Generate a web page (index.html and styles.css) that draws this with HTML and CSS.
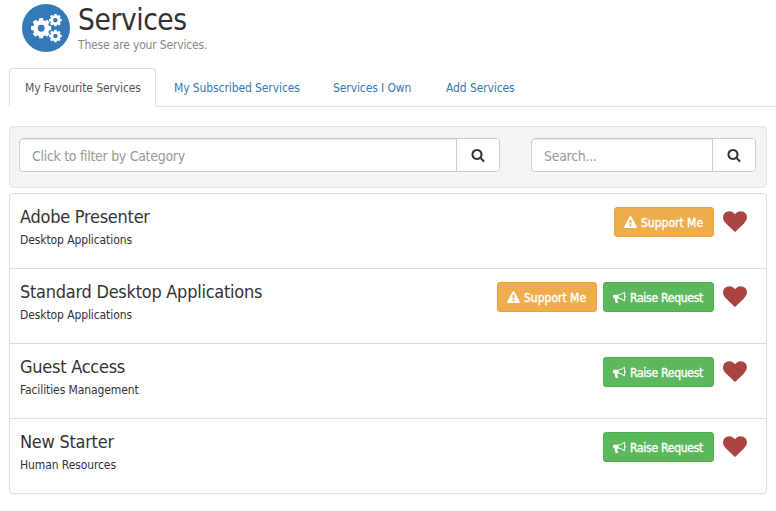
FILE: index.html
```html
<!DOCTYPE html>
<html lang="en">
<head>
<meta charset="utf-8">
<title>Services</title>
<link rel="stylesheet" href="styles.css">
</head>
<body>
<svg class="sprite" aria-hidden="true">
  <symbol id="search" viewBox="0 0 1792 1792"><path d="M1216 832q0-185-131.500-316.500t-316.500-131.500-316.500 131.500-131.500 316.500 131.500 316.500 316.500 131.500 316.500-131.500 131.500-316.500zm512 832q0 52-38 90t-90 38q-54 0-90-38l-343-342q-179 124-399 124-143 0-273.500-55.500t-225-150-150-225-55.500-273.500 55.500-273.500 150-225 225-150 273.500-55.500 273.500 55.500 225 150 150 225 55.500 273.500q0 220-124 399l343 343q37 37 37 90z"/></symbol>
  <symbol id="warning" viewBox="0 0 1792 1792"><path d="M1024 1375v-190q0-14-9.500-23.500t-22.500-9.500h-192q-13 0-22.500 9.500t-9.500 23.500v190q0 14 9.500 23.500t22.500 9.500h192q13 0 22.500-9.500t9.500-23.500zm-2-374l18-459q0-12-10-19-13-11-24-11h-220q-11 0-24 11-10 7-10 21l17 457q0 10 10 16.500t24 6.500h185q14 0 23.500-6.500t10.500-16.500zm-14-934l768 1408q35 63-2 126-17 29-46.500 46t-63.500 17h-1536q-34 0-63.500-17t-46.500-46q-37-63-2-126l768-1408q17-31 47-49t65-18 65 18 47 49z"/></symbol>
  <symbol id="bullhorn" viewBox="0 0 1792 1792"><path d="M1664 640q53 0 90.500 37.500t37.500 90.500-37.500 90.500-90.500 37.500v384q0 52-38 90t-90 38q-417-347-812-380-58 19-91 66t-31 100.500 40 92.500q-20 33-23 65.500t6 58 33.500 55 48 50 61.500 50.500q-29 58-111.500 83t-168.500 11.500-132-55.500q-7-23-29.500-87.500t-32-94.500-23-89-15-101 3.500-98.500 22-110.500h-122q-66 0-113-47t-47-113v-192q0-66 47-113t113-47h480q435 0 896-384 52 0 90 38t38 90v384zm-128 604v-954q-394 302-768 343v270q377 42 768 341z"/></symbol>
  <symbol id="heart" viewBox="0 128 1792 1536"><path d="M896 1664q-26 0-44-18l-624-602q-10-8-27.500-26t-55.500-65.500-68-97.500-53.500-121-23.500-138q0-220 127-344t351-124q62 0 126.500 21.500t120 58 95.500 68.500 76 68q36-36 76-68t95.500-68.500 120-58 126.500-21.500q224 0 351 124t127 344q0 221-229 450l-623 600q-18 18-44 18z"/></symbol>
  <symbol id="gear" viewBox="-10 -10 20 20"><circle r="5.700" fill="none" stroke="#fff" stroke-width="4.600"/><path d="M-2.300-7h4.600L1.800-10h-3.600zM-2.300 7h4.600L1.800 10h-3.600zM-7-2.300v4.600L-10 1.800v-3.600zM7-2.300v4.600L10 1.800v-3.600z"/><path transform="rotate(45)" d="M-2.300-7h4.600L1.800-10h-3.600zM-2.300 7h4.600L1.800 10h-3.600zM-7-2.300v4.600L-10 1.800v-3.600zM7-2.300v4.600L10 1.800v-3.600z"/></symbol>
</svg>

<header class="page-header">
  <svg class="logo" viewBox="0 0 48 48">
    <circle cx="24" cy="24" r="24" fill="#337ab7"/>
    <g fill="#fff">
      <use href="#gear" x="9" y="14" width="20.400" height="20.400"/>
      <use href="#gear" x="27" y="9.800" width="12.800" height="12.800"/>
      <use href="#gear" x="27" y="25.600" width="12.800" height="12.800"/>
    </g>
  </svg>
  <div>
    <h1>Services</h1>
    <p class="lead">These are your Services.</p>
  </div>
</header>

<nav class="tabs">
  <a class="tab active t1">My Favourite Services</a>
  <a class="tab t2">My Subscribed Services</a>
  <a class="tab t3">Services I Own</a>
  <a class="tab t4">Add Services</a>
</nav>

<section class="well">
  <div class="group category"><input placeholder="Click to filter by Category"><button><svg><use href="#search"/></svg></button></div>
  <div class="group find"><input placeholder="Search..."><button><svg><use href="#search"/></svg></button></div>
</section>

<ul class="list">
  <li>
    <div class="info"><h2>Adobe Presenter</h2><p>Desktop Applications</p></div>
    <button class="btn support"><svg><use href="#warning"/></svg><span>Support Me</span></button>
    <svg class="heart"><use href="#heart"/></svg>
  </li>
  <li>
    <div class="info"><h2>Standard Desktop Applications</h2><p>Desktop Applications</p></div>
    <button class="btn support"><svg><use href="#warning"/></svg><span>Support Me</span></button>
    <button class="btn raise"><svg><use href="#bullhorn"/></svg><span>Raise Request</span></button>
    <svg class="heart"><use href="#heart"/></svg>
  </li>
  <li>
    <div class="info"><h2>Guest Access</h2><p>Facilities Management</p></div>
    <button class="btn raise"><svg><use href="#bullhorn"/></svg><span>Raise Request</span></button>
    <svg class="heart"><use href="#heart"/></svg>
  </li>
  <li>
    <div class="info"><h2>New Starter</h2><p>Human Resources</p></div>
    <button class="btn raise"><svg><use href="#bullhorn"/></svg><span>Raise Request</span></button>
    <svg class="heart"><use href="#heart"/></svg>
  </li>
</ul>
</body>
</html>
```
FILE: styles.css
```css
* { box-sizing: border-box; }
body {
  margin: 0;
  padding: 4px 0 0 9px;
  background: #fff;
  color: #333;
  font-family: Tahoma, "DejaVu Sans Condensed", "DejaVu Sans", sans-serif;
  font-stretch: condensed;
  font-size: 12px;
  line-height: 17px;
  letter-spacing: -.1px;
  overflow: hidden;
}
h1, h2, p, ul { margin: 0; padding: 0; font-weight: 400; }
svg { fill: currentColor; flex: none; }
.sprite { position: absolute; width: 0; height: 0; }
.page-header { display: flex; gap: 8px; height: 64px; padding-left: 13px; }
.logo { width: 48px; height: 48px; }
h1 { font-size: 29.5px; line-height: 32px; letter-spacing: -.4px; }
.lead { color: #888; letter-spacing: -.17px; padding-top: 1px; }
.tabs { display: flex; height: 39px; border-bottom: 1px solid #ddd; }
.tab {
  height: 39px;
  padding: 11px 15px 0;
  border: 1px solid transparent;
  border-radius: 4px 4px 0 0;
  color: #337ab7;
  white-space: nowrap;
  margin-right: 2px;
}
.tab.active { background: #fff; color: #555; border-color: #ddd; border-bottom-color: #fff; }
.t1 { width: 147px; }
.t2 { width: 157px; }
.t3 { width: 111px; }
.well {
  display: flex;
  justify-content: space-between;
  width: 758px;
  height: 62px;
  margin: 19px 0 5px;
  padding: 11px 10px 0 9px;
  background: #f4f4f4;
  border: 1px solid #e3e3e3;
  border-radius: 4px;
}
.group {
  display: flex;
  height: 34px;
  background: #fff;
  border: 1px solid #ccc;
  border-radius: 4px;
  overflow: hidden;
}
.category { width: 481px; }
.find { width: 225px; }
.group input {
  flex: 1;
  min-width: 0;
  border: 0;
  padding: 2px 12px 0;
  background: transparent;
  font: inherit;
  font-size: 14px;
  letter-spacing: -.3px;
  box-shadow: inset 0 1px 1px rgba(0,0,0,.075);
}
.group input::placeholder { color: #999; opacity: 1; }
.group button {
  width: 43px;
  padding: 0;
  border: 0;
  border-left: 1px solid #ccc;
  background: #fff;
  color: #333;
  display: flex;
  align-items: center;
  justify-content: center;
}
.group button svg { width: 14px; height: 14px; }
.list { width: 758px; height: 301px; list-style: none; border: 1px solid #ddd; border-radius: 4px; }
.list li {
  display: flex;
  align-items: flex-start;
  gap: 6px;
  height: 75px;
  padding: 13px 19px 0 10px;
  border-bottom: 1px solid #ddd;
}
.list li:last-child { height: 74px; border-bottom: 0; }
.info { flex: 1; }
h2 { font-size: 18px; line-height: 20px; margin-bottom: 5px; letter-spacing: -.26px; }
.btn {
  display: flex;
  align-items: center;
  gap: 3px;
  height: 30px;
  padding: 1px 0 0 10px;
  border: 1px solid;
  border-radius: 3px;
  color: #fff;
  font: inherit;
  white-space: nowrap;
}
.btn svg { width: 13px; height: 13px; margin: -1px 1px 0 -1px; }
.support { width: 100px; background: #f0ad4e; border-color: #eea236; letter-spacing: 0; }
.raise { width: 111px; background: #5cb85c; border-color: #4cae4c; letter-spacing: -.25px; }
.btn span { padding-top: 1px; -webkit-text-stroke: .35px #fff; }
.heart { width: 24px; height: 21px; margin: 4px 0 0 3px; color: #a94442; }
```
